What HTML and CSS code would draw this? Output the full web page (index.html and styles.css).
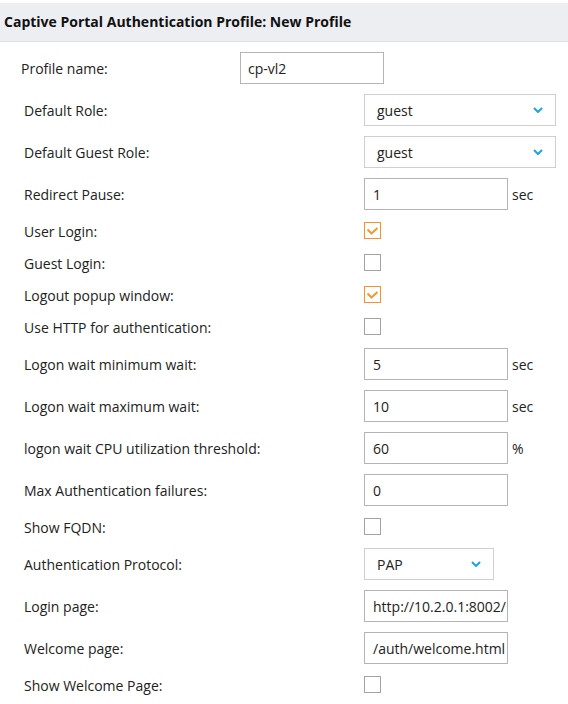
FILE: index.html
```html
<!DOCTYPE html>
<html>
<head>
<meta charset="utf-8">
<link rel="stylesheet" href="styles.css">
</head>
<body>
<div class="header">Captive Portal Authentication Profile: New Profile</div>

<div class="profile">
  <div class="row">
    <div class="plabel">Profile name:</div>
    <div class="field"><span class="input pinput">cp-vl2</span></div>
  </div>
</div>

<div class="form">
  <div class="row">
    <div class="label">Default Role:</div>
    <div class="field"><span class="select wide">guest<svg class="chev" width="10" height="6" viewBox="0 0 10 6"><polyline points="1,1 5,5 9,1" fill="none" stroke="#1aa3e8" stroke-width="2"/></svg></span></div>
  </div>
  <div class="row">
    <div class="label">Default Guest Role:</div>
    <div class="field"><span class="select wide">guest<svg class="chev" width="10" height="6" viewBox="0 0 10 6"><polyline points="1,1 5,5 9,1" fill="none" stroke="#1aa3e8" stroke-width="2"/></svg></span></div>
  </div>
  <div class="row">
    <div class="label">Redirect Pause:</div>
    <div class="field"><span class="input">1</span><span class="unit">sec</span></div>
  </div>
  <div class="row crow">
    <div class="label">User Login:</div>
    <div class="field"><span class="cb on"><svg width="15" height="15" viewBox="0 0 15 15"><polyline points="2.5,6.5 6.5,10.5 12.5,5" fill="none" stroke="#f7931e" stroke-width="1.8"/></svg></span></div>
  </div>
  <div class="row crow">
    <div class="label">Guest Login:</div>
    <div class="field"><span class="cb"></span></div>
  </div>
  <div class="row crow">
    <div class="label">Logout popup window:</div>
    <div class="field"><span class="cb on"><svg width="15" height="15" viewBox="0 0 15 15"><polyline points="2.5,6.5 6.5,10.5 12.5,5" fill="none" stroke="#f7931e" stroke-width="1.8"/></svg></span></div>
  </div>
  <div class="row crow">
    <div class="label">Use HTTP for authentication:</div>
    <div class="field"><span class="cb"></span></div>
  </div>
  <div class="row">
    <div class="label">Logon wait minimum wait:</div>
    <div class="field"><span class="input">5</span><span class="unit">sec</span></div>
  </div>
  <div class="row">
    <div class="label">Logon wait maximum wait:</div>
    <div class="field"><span class="input">10</span><span class="unit">sec</span></div>
  </div>
  <div class="row">
    <div class="label">logon wait CPU utilization threshold:</div>
    <div class="field"><span class="input">60</span><span class="unit">%</span></div>
  </div>
  <div class="row">
    <div class="label">Max Authentication failures:</div>
    <div class="field"><span class="input">0</span></div>
  </div>
  <div class="row crow">
    <div class="label">Show FQDN:</div>
    <div class="field"><span class="cb"></span></div>
  </div>
  <div class="row">
    <div class="label">Authentication Protocol:</div>
    <div class="field"><span class="select narrow">PAP<svg class="chev" width="10" height="6" viewBox="0 0 10 6"><polyline points="1,1 5,5 9,1" fill="none" stroke="#1aa3e8" stroke-width="2"/></svg></span></div>
  </div>
  <div class="row">
    <div class="label">Login page:</div>
    <div class="field"><span class="input clip">http://10.2.0.1:8002/</span></div>
  </div>
  <div class="row">
    <div class="label">Welcome page:</div>
    <div class="field"><span class="input clip">/auth/welcome.html</span></div>
  </div>
  <div class="row crow">
    <div class="label">Show Welcome Page:</div>
    <div class="field"><span class="cb"></span></div>
  </div>
</div>
</body>
</html>
```

FILE: styles.css
```css
html, body {
  margin: 0;
  padding: 0;
  background: #fff;
}
body {
  padding-top: 3px;
  font-family: "Open Sans", "Noto Sans", sans-serif;
  font-size: 14px;
  color: #222;
}
.header {
  box-sizing: border-box;
  height: 39px;
  line-height: 38px;
  background: #eceef2;
  border-bottom: 1px solid #dcdee2;
  padding-left: 4px;
  font-weight: 700;
  font-size: 14px;
  color: #111;
}
.profile {
  margin-top: 5px;
  padding-left: 21px;
}
.profile .plabel {
  width: 219px;
}
.form {
  padding-left: 24px;
}
.row {
  display: flex;
  align-items: center;
  height: 42px;
}
.crow {
  height: 32px;
}
.label {
  width: 340px;
  flex: none;
}
.plabel {
  flex: none;
}
.field {
  display: flex;
  align-items: center;
}
.input, .select {
  box-sizing: border-box;
  height: 32px;
  line-height: 31px;
  background: #fff;
  color: #222;
  white-space: nowrap;
  overflow: hidden;
}
.input {
  width: 144px;
  border: 1px solid #b4b4b4;
  padding: 0 8px;
}
.pinput {
  padding-left: 7px;
}
.clip {
  padding-right: 0;
}
.select {
  border: 1px solid #cfcfcf;
  padding: 0 12px;
  display: flex;
  align-items: center;
  justify-content: space-between;
}
.wide {
  width: 192px;
}
.narrow {
  width: 130px;
}
.chev {
  display: block;
}
.unit {
  margin-left: 4px;
  color: #222;
}
.cb {
  box-sizing: border-box;
  width: 17px;
  height: 17px;
  border: 1px solid #a3a3a3;
  background: #fff;
  display: flex;
  align-items: center;
  justify-content: center;
  margin-top: -1px;
}
.cb.on {
  border-color: #f7931e;
}
.cb svg {
  display: block;
}
```
